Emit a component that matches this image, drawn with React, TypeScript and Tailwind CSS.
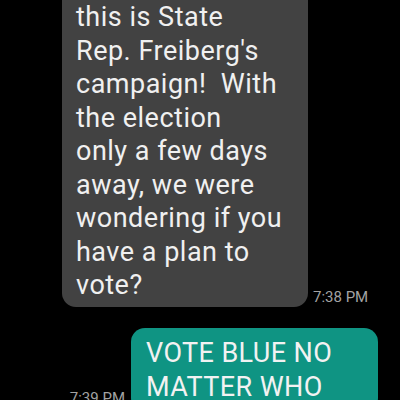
export default function App() {
  const lines = [
    "this is State",
    "Rep. Freiberg's",
    "campaign!\u00a0 With",
    "the election",
    "only a few days",
    "away, we were",
    "wondering if you",
    "have a plan to",
    "vote?",
  ];
  return (
    <div
      className="w-[400px] h-[400px] bg-black overflow-hidden"
      style={{ fontFamily: "Roboto, 'Noto Sans', sans-serif" }}
    >
      <div className="flex items-end pl-[62px]">
        <div className="w-[246px] bg-[#424242] rounded-b-[14px] pl-[14px] pt-[1px] pb-[4px] text-[27px] leading-[33.5px] tracking-[0.5px] text-[#f0f0f0]">
          {lines.map((l) => (
            <div key={l} className="whitespace-pre">
              {l}
            </div>
          ))}
        </div>
        <div className="ml-[5px] text-[15px] leading-[20px] text-[#a3a3a3] whitespace-nowrap">
          7:38 PM
        </div>
      </div>
      <div className="flex items-end justify-end pr-[22px] mt-[21px]">
        <div className="mr-[6px] mb-[4px] text-[15px] leading-[20px] text-[#a3a3a3] whitespace-nowrap">
          7:39 PM
        </div>
        <div className="w-[247px] bg-[#0f9483] rounded-[14px] pl-[15px] pt-[8px] pb-[8px] text-[27px] leading-[34px] tracking-[0.4px] text-[#f2f2f2]">
          <div>VOTE BLUE NO</div>
          <div>MATTER WHO</div>
        </div>
      </div>
    </div>
  );
}
